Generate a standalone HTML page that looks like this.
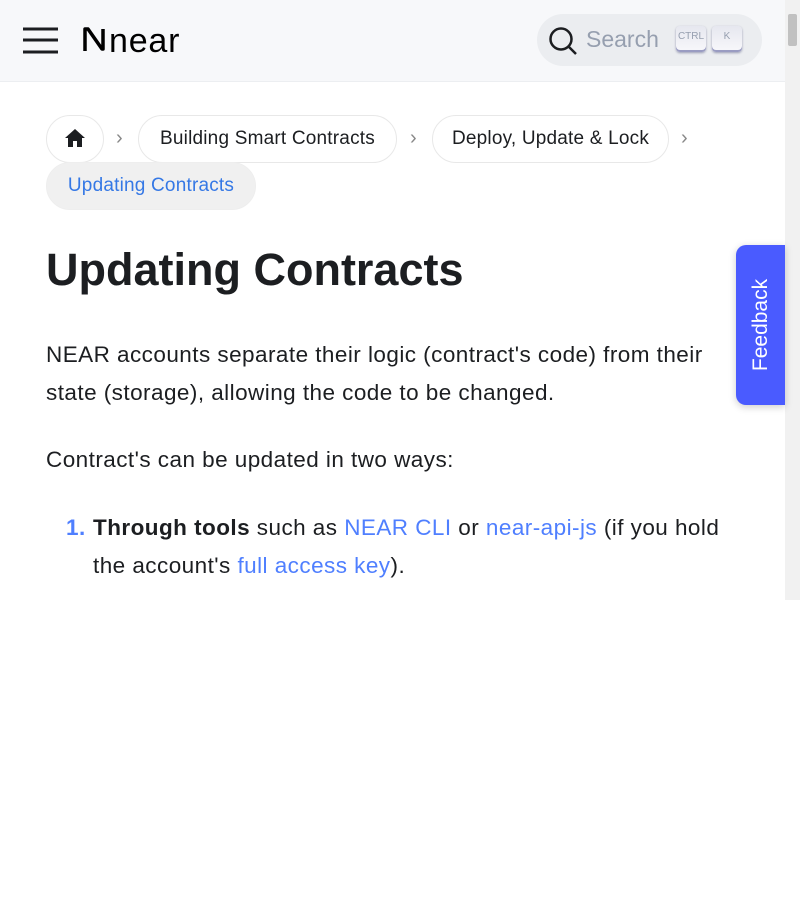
<!DOCTYPE html>
<html><head><meta charset="utf-8"><style>
*{box-sizing:border-box;margin:0;padding:0}
body{width:800px;height:900px;background:#fff;font-family:"Liberation Sans",sans-serif;color:#1c1e21;position:relative;overflow:hidden}
.view{position:absolute;left:0;top:0;width:800px;height:600px;overflow:hidden}
.hdr{position:absolute;left:0;top:0;width:785px;height:82px;background:#f7f8fa;border-bottom:1px solid #eceef1}
.sb{position:absolute;left:785px;top:0;width:15px;height:600px;background:#f1f1f1}
.thumb{position:absolute;left:788px;top:14px;width:9px;height:32px;background:#c1c1c1;border-radius:2px}
.search{position:absolute;left:537px;top:14px;width:225px;height:52px;border-radius:26px;background:#ebedf0}
.key{position:absolute;top:12px;width:30px;height:26px;border-radius:4px;background:linear-gradient(#e6e7ef,#f8f8fb);box-shadow:inset 0 -2px 0 #9a9cc2,0 1px 2px rgba(30,35,90,.4);font-size:10px;color:#969faf;text-align:center;line-height:22px}
.pill{position:absolute;height:48px;border:1px solid #e8e8e8;border-radius:24px;font-size:19px;line-height:46px;text-align:center;color:#1c1e21;white-space:nowrap;letter-spacing:0.2px}
.chev{position:absolute;top:127px;color:#888;font-size:20px}
h1{position:absolute;left:46px;top:244px;font-size:45px;font-weight:700;color:#1c1e21}
p{position:absolute;left:46px;font-size:22.5px;line-height:38px;width:700px;letter-spacing:0.45px}
a{color:#4f7fff;text-decoration:none}
.fb{position:absolute;left:736px;top:245px;width:49px;height:160px;background:#4a5bff;border-radius:10px 0 0 10px;box-shadow:0 2px 8px rgba(0,0,0,.2)}
.fb span{position:absolute;left:50%;top:50%;transform:translate(-50%,-50%) rotate(-90deg);color:#fff;font-size:21px;white-space:nowrap}
</style></head><body><div class="view">
<div class="hdr">
<svg style="position:absolute;left:23px;top:27px" width="36" height="28"><g stroke="#1c1e21" stroke-width="3"><line x1="0" y1="2" x2="35" y2="2"/><line x1="0" y1="13" x2="35" y2="13"/><line x1="0" y1="25" x2="35" y2="25"/></g></svg>
<svg style="position:absolute;left:82px;top:27px" width="26" height="26" viewBox="0 0 26 26"><path d="M3 24V2h3l14 20h1V2" fill="none" stroke="#000" stroke-width="3.5" stroke-linejoin="round"/></svg>
<div style="position:absolute;left:109px;top:22px;font-size:34px;letter-spacing:0.8px;color:#000">near</div>
<div class="search">
<svg style="position:absolute;left:11px;top:12px" width="30" height="30"><circle cx="13" cy="13" r="10.5" fill="none" stroke="#1c1e21" stroke-width="2.5"/><line x1="21" y1="21" x2="28" y2="28" stroke="#1c1e21" stroke-width="2.5"/></svg>
<div style="position:absolute;left:49px;top:12px;font-size:23px;color:#969faf">Search</div>
<div class="key" style="left:139px">CTRL</div><div class="key" style="left:175px">K</div>
</div></div>
<div class="sb"></div><div class="thumb"></div>
<div class="pill" style="left:46px;top:115px;width:58px"><svg style="position:absolute;left:18px;top:13px" width="20" height="18" viewBox="0 0 20 18"><path d="M10 0L0 9h3v9h5v-6h4v6h5V9h3z" fill="#1c1e21"/></svg></div>
<div class="chev" style="left:116px">›</div>
<div class="pill" style="left:138px;top:115px;width:259px">Building Smart Contracts</div>
<div class="chev" style="left:410px">›</div>
<div class="pill" style="left:432px;top:115px;width:237px">Deploy, Update &amp; Lock</div>
<div class="chev" style="left:681px">›</div>
<div class="pill" style="left:46px;top:162px;width:210px;background:#f0f0f0;border-color:#eee;color:#3578e5">Updating Contracts</div>
<h1>Updating Contracts</h1>
<p style="top:336px">NEAR accounts separate their logic (contract's code) from their state (storage), allowing the code to be changed.</p>
<p style="top:441px">Contract's can be updated in two ways:</p>
<p style="top:509px;left:66px;width:680px"><span style="position:absolute;left:0;color:#4f7fff;font-weight:700">1.</span><span style="display:block;padding-left:27px"><b>Through tools</b> such as <a>NEAR CLI</a> or <a>near-api-js</a> (if you hold the account's <a>full access key</a>).</span></p>
<div class="fb"><span>Feedback</span></div>
</div></body></html>
